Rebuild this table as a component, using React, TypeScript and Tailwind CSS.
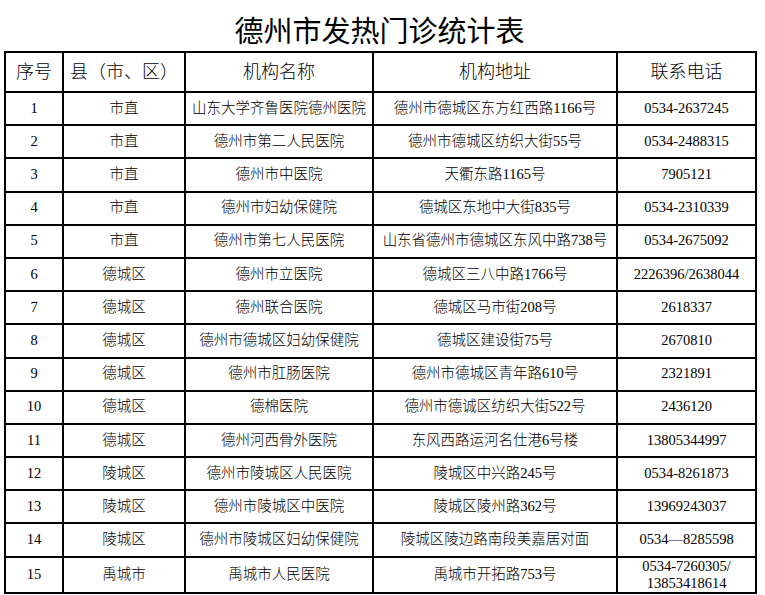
import React from 'react'

type Row = [string, string, string, string, string]

const rows: Row[] = [
  ['1', '市直', '山东大学齐鲁医院德州医院', '德州市德城区东方红西路1166号', '0534-2637245'],
  ['2', '市直', '德州市第二人民医院', '德州市德城区纺织大街55号', '0534-2488315'],
  ['3', '市直', '德州市中医院', '天衢东路1165号', '7905121'],
  ['4', '市直', '德州市妇幼保健院', '德城区东地中大街835号', '0534-2310339'],
  ['5', '市直', '德州市第七人民医院', '山东省德州市德城区东风中路738号', '0534-2675092'],
  ['6', '德城区', '德州市立医院', '德城区三八中路1766号', '2226396/2638044'],
  ['7', '德城区', '德州联合医院', '德城区马市街208号', '2618337'],
  ['8', '德城区', '德州市德城区妇幼保健院', '德城区建设街75号', '2670810'],
  ['9', '德城区', '德州市肛肠医院', '德州市德城区青年路610号', '2321891'],
  ['10', '德城区', '德棉医院', '德州市德诚区纺织大街522号', '2436120'],
  ['11', '德城区', '德州河西骨外医院', '东风西路运河名仕港6号楼', '13805344997'],
  ['12', '陵城区', '德州市陵城区人民医院', '陵城区中兴路245号', '0534-8261873'],
  ['13', '陵城区', '德州市陵城区中医院', '陵城区陵州路362号', '13969243037'],
  ['14', '陵城区', '德州市陵城区妇幼保健院', '陵城区陵边路南段美嘉居对面', '0534—8285598'],
]

const headers = ['序号', '县（市、区）', '机构名称', '机构地址', '联系电话']

const cell = 'border-2 border-black text-center align-middle p-0 whitespace-nowrap'

export default function App() {
  return (
    <div className="bg-white w-[765px] h-[595px] overflow-hidden text-black">
      <div
        className="h-[51px] w-[751px] ml-[4px] flex items-center justify-center pt-[8px] text-[29px] leading-none"
        style={{ fontFamily: '"Noto Sans CJK SC", sans-serif' }}
      >
        德州市发热门诊统计表
      </div>
      <table
        className="ml-[4px] w-[751px] table-fixed border-collapse text-[14.5px] font-light"
        style={{ fontFamily: '"Liberation Serif", "Noto Sans CJK SC", serif' }}
      >
        <colgroup>
          <col className="w-[58px]" />
          <col className="w-[122px]" />
          <col className="w-[188px]" />
          <col className="w-[244px]" />
          <col className="w-[139px]" />
        </colgroup>
        <thead>
          <tr className="h-[40px]">
            {headers.map((h) => (
              <th key={h} className={`${cell} text-[18px] font-light`}>
                {h}
              </th>
            ))}
          </tr>
        </thead>
        <tbody>
          {rows.map((r) => (
            <tr key={r[0]} className="h-[33.2px]">
              {r.map((c, i) => (
                <td key={i} className={cell}>
                  {c}
                </td>
              ))}
            </tr>
          ))}
          <tr className="h-[33.2px]">
            <td className={cell}>15</td>
            <td className={cell}>禹城市</td>
            <td className={cell}>禹城市人民医院</td>
            <td className={cell}>禹城市开拓路753号</td>
            <td className={`${cell} leading-[17px]`}>
              0534-7260305/
              <br />
              13853418614
            </td>
          </tr>
        </tbody>
      </table>
    </div>
  )
}
